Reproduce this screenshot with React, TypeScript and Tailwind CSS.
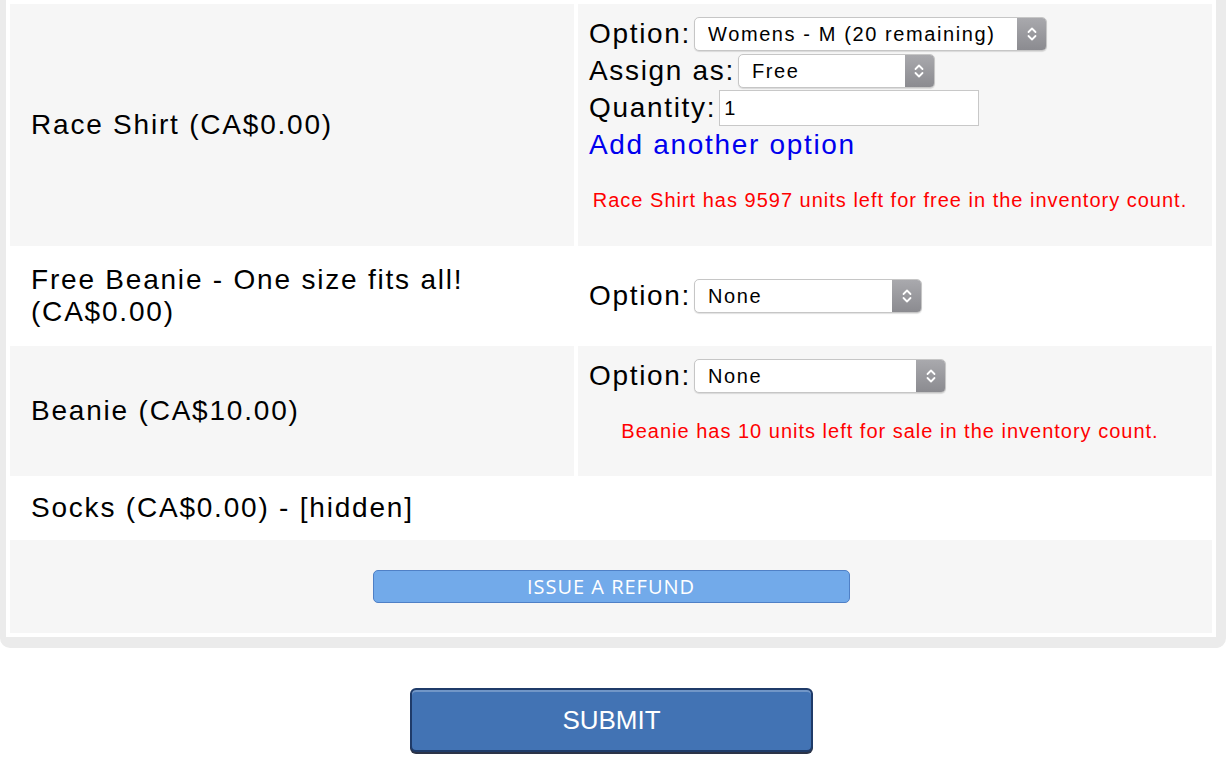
import React from 'react';

const Chevrons = () => (
    <svg width="12" height="20" viewBox="0 0 12 20" fill="none">
        <path d="M2.5 8 L6 4.5 L9.5 8" stroke="white" strokeWidth="1.8" strokeLinecap="round" strokeLinejoin="round" />
        <path d="M2.5 12 L6 15.5 L9.5 12" stroke="white" strokeWidth="1.8" strokeLinecap="round" strokeLinejoin="round" />
    </svg>
);

interface FakeSelectProps {
    value: string;
    width: string;
}

// mac-looking select box
const FakeSelect: React.FC<FakeSelectProps> = ({ value, width }) => (
    <div className={`relative h-[34px] ${width} rounded-[5px] border border-[#c6c6c6] bg-white shadow-[0_1px_1px_rgba(0,0,0,0.12)]`}>
        <select
            defaultValue={value}
            className="h-full w-full appearance-none bg-transparent pl-[13px] pr-8 text-[20px] tracking-[0.08em] text-black outline-none"
        >
            <option>{value}</option>
        </select>
        <span className="pointer-events-none absolute right-0 top-0 flex h-full w-[29px] items-center justify-center rounded-r-[4px] bg-gradient-to-b from-[#a9a9ad] to-[#8b8b90]">
            <Chevrons />
        </span>
    </div>
);

const Label: React.FC<{ children: React.ReactNode }> = ({ children }) => (
    <span className="mr-[3px] text-[28px] leading-none tracking-[0.06em] text-black">{children}</span>
);

const Warning: React.FC<{ children: React.ReactNode }> = ({ children }) => (
    <p className="mt-[25px] pr-[10px] text-center text-[20px] leading-[24px] tracking-[0.05em] text-[#ff0000]">{children}</p>
);

const leftCell = 'w-[564px] bg-[#f6f6f6] pl-[21px] pr-[21px] align-middle text-[28px] leading-[32px] tracking-[0.064em] text-black';

export default function App() {
    return (
        <div className="min-h-[776px] bg-white font-['Liberation_Sans',Arial,sans-serif]">
            <div className="rounded-b-[10px] border-b-[11px] border-l-[6px] border-r-[10px] border-[#ebebeb] bg-white">
                <table className="w-full border-separate border-spacing-[4px]">
                    <tbody>
                        <tr className="h-[242px]">
                            <td className={leftCell}>Race Shirt (CA$0.00)</td>
                            <td className="bg-[#f6f6f6] pl-[11px] pr-[11px] pt-[12px] align-top">
                                <div className="flex h-[36px] items-center">
                                    <Label>Option:</Label>
                                    <FakeSelect value="Womens - M (20 remaining)" width="w-[353px]" />
                                </div>
                                <div className="flex h-[37px] items-center">
                                    <Label>Assign as:</Label>
                                    <FakeSelect value="Free" width="w-[197px]" />
                                </div>
                                <div className="flex h-[38px] items-center">
                                    <Label>Quantity:</Label>
                                    <input
                                        defaultValue="1"
                                        className="h-[36px] w-[260px] border border-[#c8c8c8] bg-white pl-[4px] text-[20px] text-black outline-none"
                                    />
                                </div>
                                <a href="#" className="block text-[28px] leading-[36px] tracking-[0.06em] text-[#0000ee]">
                                    Add another option
                                </a>
                                <Warning>Race Shirt has 9597 units left for free in the inventory count.</Warning>
                            </td>
                        </tr>
                        <tr className="h-[92px]">
                            <td className="w-[564px] bg-white pl-[21px] pr-[21px] align-middle text-[28px] leading-[32px] tracking-[0.064em] text-black">
                                Free Beanie - One size fits all! (CA$0.00)
                            </td>
                            <td className="bg-white pl-[11px] align-middle">
                                <div className="flex items-center">
                                    <Label>Option:</Label>
                                    <FakeSelect value="None" width="w-[228px]" />
                                </div>
                            </td>
                        </tr>
                        <tr className="h-[130px]">
                            <td className={leftCell}>Beanie (CA$10.00)</td>
                            <td className="bg-[#f6f6f6] pl-[11px] pr-[11px] pt-[12px] align-top">
                                <div className="flex h-[36px] items-center">
                                    <Label>Option:</Label>
                                    <FakeSelect value="None" width="w-[252px]" />
                                </div>
                                <Warning>Beanie has 10 units left for sale in the inventory count.</Warning>
                            </td>
                        </tr>
                        <tr className="h-[56px]">
                            <td className="w-[564px] bg-white pl-[21px] align-middle text-[28px] leading-[32px] tracking-[0.064em] text-black">
                                Socks (CA$0.00) - [hidden]
                            </td>
                            <td className="bg-white"></td>
                        </tr>
                        <tr className="h-[93px]">
                            <td colSpan={2} className="bg-[#f6f6f6] align-middle">
                                <button
                                    type="button"
                                    className="mx-auto flex h-[33px] w-[477px] items-center justify-center rounded-[5px] border border-[#4f80c6] bg-[#72aaea] font-['Open_Sans',sans-serif] text-[20px] tracking-[0.05em] text-white"
                                >
                                    ISSUE A REFUND
                                </button>
                            </td>
                        </tr>
                    </tbody>
                </table>
            </div>
            <div className="mt-[40px] flex justify-center pr-[3px]">
                <button
                    type="submit"
                    className="h-[64px] w-[403px] rounded-[6px] border-2 border-[#1f3b69] bg-[#4273b4] text-[26px] text-white shadow-[inset_0_2px_0_rgba(255,255,255,0.25),0_2px_0_#2c3448]"
                >
                    SUBMIT
                </button>
            </div>
        </div>
    );
}
